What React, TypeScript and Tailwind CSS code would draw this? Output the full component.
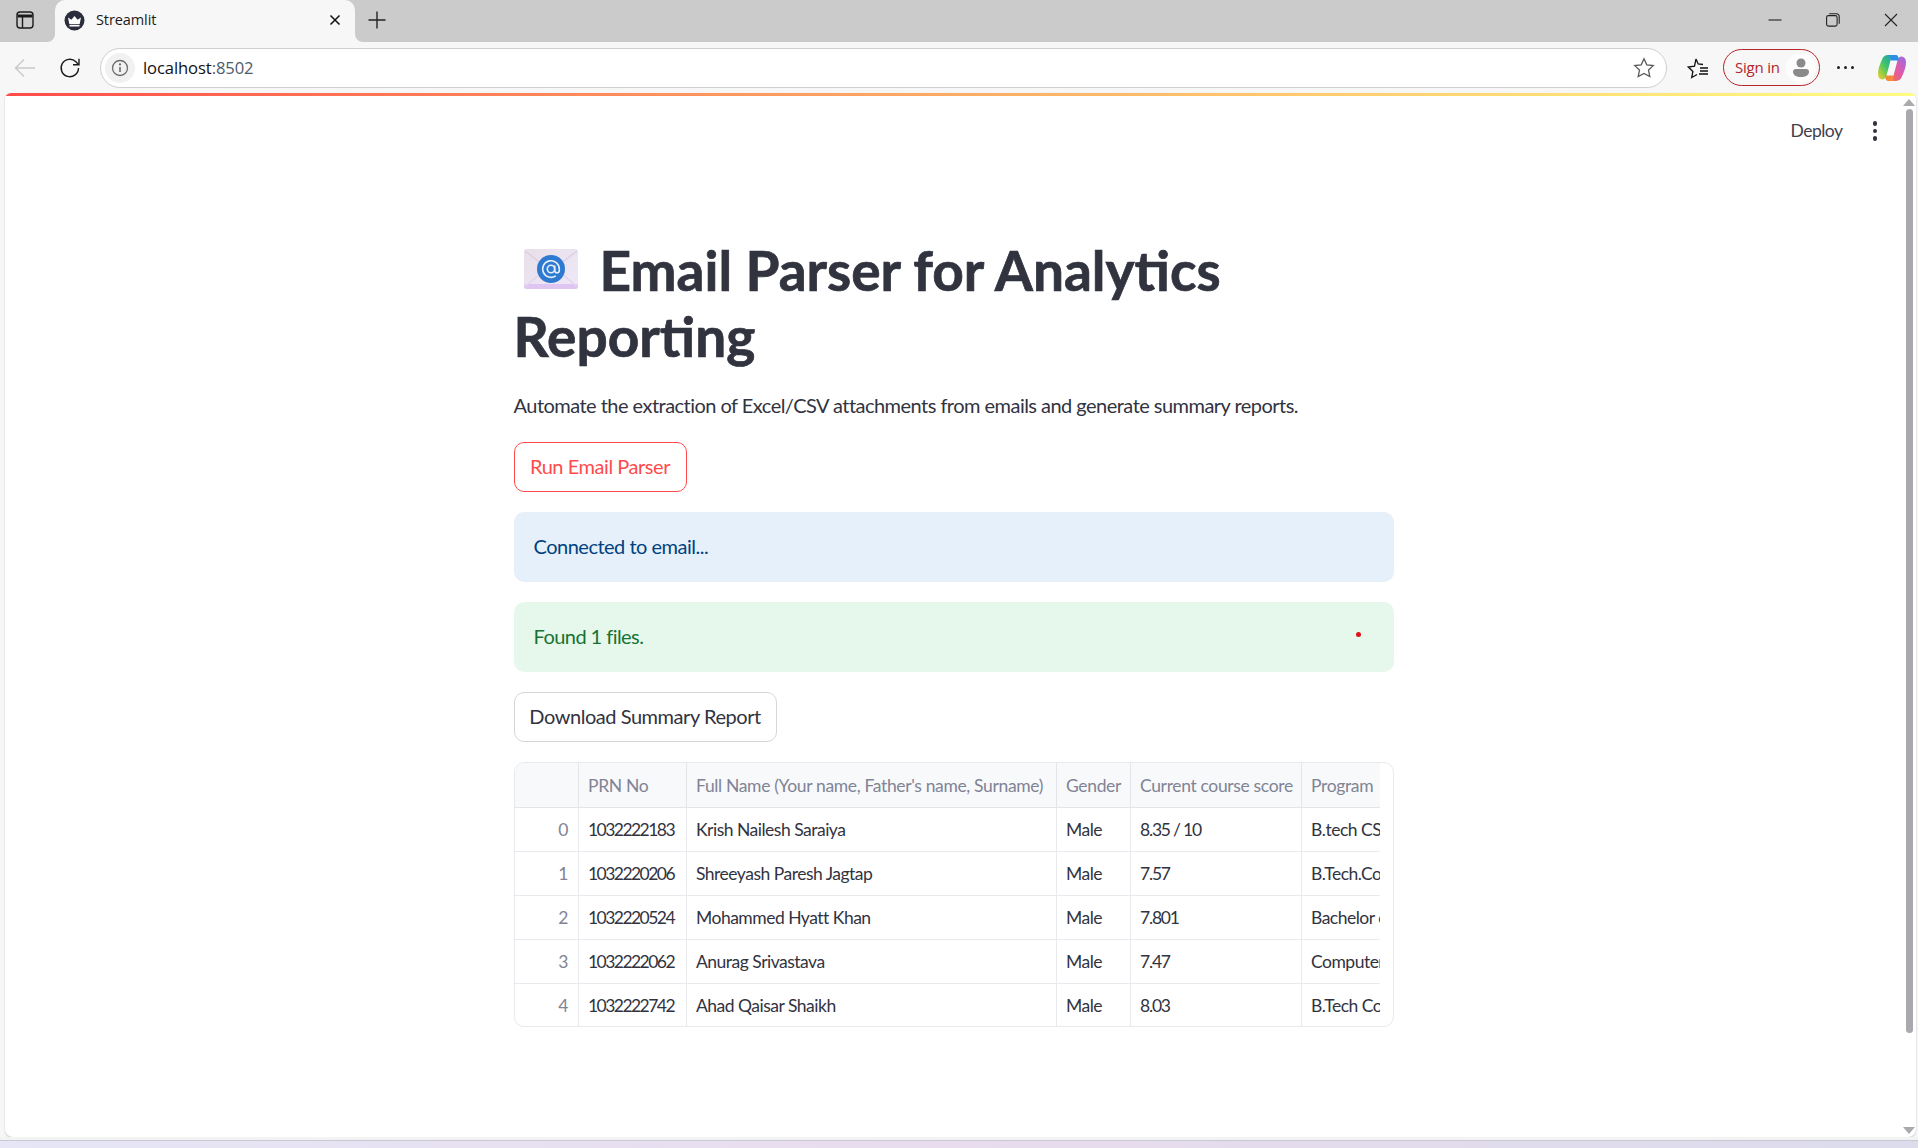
const rows = [
  ["0", "1032222183", "Krish Nailesh Saraiya", "Male", "8.35 / 10", "B.tech CSE"],
  ["1", "1032220206", "Shreeyash Paresh Jagtap", "Male", "7.57", "B.Tech.Computer"],
  ["2", "1032220524", "Mohammed Hyatt Khan", "Male", "7.801", "Bachelor of Technology"],
  ["3", "1032222062", "Anurag Srivastava", "Male", "7.47", "Computer Engineering"],
  ["4", "1032222742", "Ahad Qaisar Shaikh", "Male", "8.03", "B.Tech Computer"],
];
const heads = ["", "PRN No", "Full Name (Your name, Father's name, Surname)", "Gender", "Current course score", "Program"];

function TabCorner({ side }: { side: "l" | "r" }) {
  return (
    <span className={side === "l" ? "absolute bottom-0 -left-[8px] w-[8px] h-[8px] bg-[#f7f7f7]" : "absolute bottom-0 -right-[8px] w-[8px] h-[8px] bg-[#f7f7f7]"}>
      <span className={side === "l" ? "block w-full h-full bg-[#cbcbcb] rounded-br-[8px]" : "block w-full h-full bg-[#cbcbcb] rounded-bl-[8px]"} />
    </span>
  );
}

function TabBar() {
  return (
    <div className="h-[42px] bg-[#cbcbcb] flex items-stretch shrink-0">
      <div className="w-[55px] flex items-center justify-center pr-[6px] pb-[2px]">
        <svg width="20" height="20" viewBox="0 0 20 20" fill="none" stroke="#1b1b1b" strokeWidth="1.4">
          <rect x="2" y="2" width="16" height="16" rx="3" />
          <path d="M2.5 6h15" strokeWidth="3" />
          <path d="M7.5 6v12" />
        </svg>
      </div>
      <div className="relative w-[300px] bg-[#f7f7f7] rounded-t-[10px] flex items-center pl-[9px] pr-[14px] pb-[2px]">
        <TabCorner side="l" />
        <TabCorner side="r" />
        <svg width="21" height="21" viewBox="0 0 21 21">
          <circle cx="10.5" cy="10.5" r="10" fill="#2b2d3c" />
          <path d="M4 7.5l3.4 2.3 3.1-3.8 3.1 3.8L17 7.500l-1.300 6.500H5.300z" fill="#fff" />
          <rect x="5.500" y="14.800" width="10" height="1.700" fill="#fff" />
        </svg>
        <span className="ml-[11px] flex-1 text-[14.5px] text-[#1c1c1c] font-['Open_Sans',sans-serif] tracking-[-0.1px]">Streamlit</span>
        <svg width="12" height="12" viewBox="0 0 12 12" stroke="#111" strokeWidth="1.5">
          <path d="M1.500 1.500l9 9M10.500 1.500l-9 9" />
        </svg>
      </div>
      <div className="ml-[12px] flex items-center pb-[2px]">
        <svg width="20" height="20" viewBox="0 0 20 20" stroke="#222" strokeWidth="1.4">
          <path d="M10 1.500v17M1.500 10h17" />
        </svg>
      </div>
      <div className="flex-1" />
      <div className="flex items-center pr-[20px] gap-[44px] pb-[2px]">
        <svg width="14" height="14" viewBox="0 0 14 14" stroke="#222" strokeWidth="1.100"><path d="M0.500 7h13" /></svg>
        <svg width="14" height="14" viewBox="0 0 14 14" fill="none" stroke="#222" strokeWidth="1.100">
          <rect x="0.600" y="2.600" width="10.500" height="10.500" rx="1.800" />
          <path d="M3.200 0.800h7.500a2.500 2.500 0 0 1 2.500 2.500v7.500" />
        </svg>
        <svg width="14" height="14" viewBox="0 0 14 14" stroke="#222" strokeWidth="1.100"><path d="M1 1l12 12M13 1L1 13" /></svg>
      </div>
    </div>
  );
}

function Toolbar() {
  return (
    <div className="h-[51px] bg-[#f7f7f7] flex items-center shrink-0 pl-[14px]">
      <svg width="22" height="22" viewBox="0 0 22 22" fill="none" stroke="#c9c9c9" strokeWidth="1.400" className="mr-[23px]">
        <path d="M21 11H1.500M10 2.500L1.500 11l8.500 8.500" />
      </svg>
      <svg width="22" height="22" viewBox="0 0 22 22" fill="none" stroke="#1b1b1b" strokeWidth="1.400">
        <path d="M19.500 11a8.700 8.700 0 1 1-2.600-6.200L19.500 7.400" />
        <path d="M20 1.800v6h-6" />
      </svg>
      <div className="ml-[19px] w-[1567px] h-[40px] rounded-full border border-[#cfcfcf] bg-white flex items-center pl-[4px] pr-[11px]">
        <span className="w-[30px] h-[30px] rounded-full bg-[#f1f1f1] flex items-center justify-center">
          <svg width="18" height="18" viewBox="0 0 18 18" fill="none" stroke="#6b6b6b" strokeWidth="1.300">
            <circle cx="9" cy="9" r="7.500" />
            <path d="M9 8v5" strokeWidth="1.600" />
            <circle cx="9" cy="5.400" r="0.500" fill="#6b6b6b" />
          </svg>
        </span>
        <span className="ml-[8px] flex-1 text-[16.6px] tracking-[-0.1px] text-[#111] font-['Open_Sans',sans-serif] pt-[1px]">
          localhost<span className="text-[#4d5a6d]">:8502</span>
        </span>
        <svg width="22" height="22" viewBox="0 0 22 22" fill="none" stroke="#5a5a5a" strokeWidth="1.300">
          <path d="M11 1.800l2.800 6 6.500.8-4.800 4.500 1.300 6.500L11 16.400l-5.800 3.200 1.300-6.500L1.700 8.600l6.500-.8z" />
        </svg>
      </div>
      <svg width="22" height="22" viewBox="0 0 22 22" fill="none" stroke="#111" strokeWidth="1.300" className="ml-[20px]">
        <path d="M9 2l2.200 5 4.800.5M10 17.500l-5.300 3 1.200-6L1.300 10l6.200-.9L9 2" />
        <path d="M13 11h8M13 14h8M12 17h9" />
      </svg>
      <div className="ml-[14px] w-[97px] h-[37px] rounded-full border-[1.5px] border-[#b3262b] flex items-center pl-[11px] pr-[3px] justify-between">
        <span className="text-[15px] text-[#b3262b] font-['Open_Sans',sans-serif] tracking-[-0.2px]">Sign in</span>
        <span className="w-[30px] h-[30px] rounded-full bg-[#fdfdfd] flex items-center justify-center">
          <svg width="18" height="20" viewBox="0 0 18 20" fill="#8a8a8a">
            <circle cx="9" cy="5" r="4.500" />
            <path d="M1 14a3 3 0 0 1 3-3h10a3 3 0 0 1 3 3c0 3-3.500 5-8 5s-8-2-8-5z" />
          </svg>
        </span>
      </div>
      <div className="ml-[17px] flex gap-[4px]">
        <span className="w-[3px] h-[3px] rounded-full bg-[#222]" />
        <span className="w-[3px] h-[3px] rounded-full bg-[#222]" />
        <span className="w-[3px] h-[3px] rounded-full bg-[#222]" />
      </div>
      <svg width="28" height="28" viewBox="0 0 28 26" className="ml-[24px]" preserveAspectRatio="none">
        <defs>
          <linearGradient id="cpa" x1="0" y1="1" x2="1" y2="0">
            <stop offset="0" stopColor="#f5d320" />
            <stop offset="0.5" stopColor="#3dc46a" />
            <stop offset="1" stopColor="#1d8fe0" />
          </linearGradient>
          <linearGradient id="cpb" x1="0" y1="1" x2="1" y2="0">
            <stop offset="0" stopColor="#f2703c" />
            <stop offset="0.5" stopColor="#e05aa8" />
            <stop offset="1" stopColor="#9b6ae8" />
          </linearGradient>
        </defs>
        <path d="M10 1h8c-3 0-4.500 2-5.500 5L8.500 20c-.7 2.500-2.500 4-5 3.500C1 23 0 21 0 18c0-4 2-9 4-13 1-2.500 3-4 6-4z" fill="url(#cpa)" />
        <path d="M18 25h-8c3 0 4.500-2 5.500-5l4-14c.7-2.500 2.500-4 5-3.500 2.500.5 3.500 2.500 3.500 5.500 0 4-2 9-4 13-1 2.500-3 4-6 4z" fill="url(#cpb)" />
        <path d="M18 1h-7c2 .5 1.500 3 2 5h8c-.3-2.500-1-5-3-5z" fill="#2a8fe6" />
        <path d="M10 25h7c-2-.5-1.500-3-2-5H7c.3 2.500 1 5 3 5z" fill="#f58a3a" />
      </svg>
    </div>
  );
}

function EnvelopeIcon() {
  return (
    <svg width="56" height="42" viewBox="0 0 56 42" className="inline-block align-baseline mr-[21px] ml-[9px] mb-[1px]">
      <defs>
        <linearGradient id="env" x1="0" y1="0" x2="1" y2="1">
          <stop offset="0" stopColor="#e8dfe8" />
          <stop offset="1" stopColor="#efe8f8" />
        </linearGradient>
      </defs>
      <rect x="1" y="1" width="54" height="40" rx="3" fill="url(#env)" />
      <rect x="1" y="36" width="54" height="5" rx="2.500" fill="#dfc6f2" />
      <path d="M2 3l26 20L54 3" fill="none" stroke="#ddd0e6" strokeWidth="1.500" />
      <path d="M2 39l18-16M54 39L36 23" fill="none" stroke="#e2d5ee" strokeWidth="1.500" />
      <circle cx="28" cy="21" r="14" fill="#2f7ad1" />
      <circle cx="28" cy="21" r="3.700" fill="none" stroke="#e6f0fb" strokeWidth="1.600" />
      <path d="M31.700 17.500v5a2.300 2.300 0 0 0 4.600 0V21a8.300 8.300 0 1 0-3.500 6.800" fill="none" stroke="#e6f0fb" strokeWidth="1.600" />
    </svg>
  );
}

function cellClass(i: number) {
  if (i === 0) return "text-right pr-[10px] pt-[2px] text-[#808495] border-b border-[#e9eaee]";
  if (i === 1) return "pl-[9px] pt-[2px] tracking-[-1.55px] whitespace-nowrap overflow-hidden border-l border-b border-[#e9eaee]";
  if (i === 4) return "pl-[9px] pt-[2px] tracking-[-1.2px] whitespace-nowrap overflow-hidden border-l border-b border-[#e9eaee]";
  return "pl-[9px] pt-[2px] whitespace-nowrap overflow-hidden border-l border-b border-[#e9eaee]";
}

function DataTable() {
  const widths = ["w-[64px]", "w-[108px]", "w-[370px]", "w-[74px]", "w-[171px]", "w-[78px]"];
  return (
    <div className="h-[265px] rounded-[10px] border border-[#e9eaee] pr-[14px] pb-[6px] overflow-hidden">
      <table className="table-fixed w-[865px] border-collapse text-[17.5px] tracking-[-0.5px] text-[#31333f]">
        <colgroup>
          {widths.map((w, i) => (
            <col key={i} className={w} />
          ))}
        </colgroup>
        <thead>
          <tr className="h-[44px] bg-[#f8f9fb] text-[#808495] tracking-[-0.35px]">
            {heads.map((h, i) => (
              <th key={i} className={i === 0 ? "font-normal text-left pl-[9px] pt-[2px] border-b border-[#e3e5e9]" : "font-normal text-left pl-[9px] pt-[2px] border-b border-l border-[#e3e5e9] whitespace-nowrap overflow-hidden"}>
                {h}
              </th>
            ))}
          </tr>
        </thead>
        <tbody>
          {rows.map((r, ri) => (
            <tr key={ri} className="h-[44px]">
              {r.map((c, i) => (
                <td key={i} className={cellClass(i)}>
                  {c}
                </td>
              ))}
            </tr>
          ))}
        </tbody>
      </table>
    </div>
  );
}

function Page() {
  return (
    <div className="flex-1 min-h-0 ml-[5px] mr-[2px] mt-0 bg-white rounded-t-[6px] rounded-b-[8px] shadow-[0_1px_2px_rgba(0,0,0,0.2)] flex flex-col overflow-hidden font-['Lato',sans-serif]">
      <div className="h-[3px] shrink-0 bg-gradient-to-r from-[#ff4b4b] to-[#fffd80]" />
      <div className="flex-1 min-h-0 flex">
        <div className="flex-1 min-w-0 flex flex-col">
          <div className="flex justify-end items-center h-[70px] pr-[25px] text-[17.5px] tracking-[-0.5px] text-[#3f414c]">
            <span className="mr-[30px]">Deploy</span>
            <span className="flex flex-col gap-[3px]">
              <span className="w-[4.500px] h-[4.500px] rounded-full bg-[#31333f]" />
              <span className="w-[4.500px] h-[4.500px] rounded-full bg-[#31333f]" />
              <span className="w-[4.500px] h-[4.500px] rounded-full bg-[#31333f]" />
            </span>
          </div>
          <div className="relative w-[880px] mx-auto pt-[71px] flex flex-col gap-[20px]">
            <h1 className="text-[55px] leading-[66px] font-bold tracking-[0px] text-[#31333f] [-webkit-text-stroke:0.7px_#31333f]">
              <EnvelopeIcon />
              Email Parser for Analytics Reporting
            </h1>
            <p className="text-[20px] leading-[32px] tracking-[-0.53px] text-[#31333f] mb-[1px]">
              Automate the extraction of Excel/CSV attachments from emails and generate summary reports.
            </p>
            <button className="self-start h-[50px] w-[173px] rounded-[10px] border border-[#ff4b4b] text-[20px] tracking-[-0.45px] text-[#ff4b4b] bg-white pb-[2px]">
              Run Email Parser
            </button>
            <div className="h-[70px] rounded-[10px] bg-[#e6f0fb] text-[#004280] text-[20px] tracking-[-0.5px] flex items-center px-[20px] pb-[2px]">
              Connected to email...
            </div>
            <div className="relative h-[70px] rounded-[10px] bg-[#e6f8ec] text-[#177233] text-[20px] tracking-[-0.55px] flex items-center px-[20px] pb-[2px]">
              Found 1 files.
              <span className="absolute left-[842px] top-[30px] w-[5px] h-[5px] rounded-full bg-[#e0101c]" />
            </div>
            <button className="self-start h-[50px] w-[263px] rounded-[10px] border border-[#d5d6da] text-[20px] tracking-[-0.45px] text-[#31333f] bg-white pb-[2px]">
              Download Summary Report
            </button>
            <DataTable />
          </div>
        </div>
        <div className="relative w-[14px] shrink-0 mr-0 flex flex-col items-center">
          <svg width="12" height="8" viewBox="0 0 12 8" className="mt-[3px]" fill="#a9a9ae"><path d="M6 0l6 7H0z" /></svg>
          <div className="mt-[2px] w-[7px] h-[924px] rounded-full bg-[#a9a9ae]" />
          <div className="flex-1" />
          <svg width="12" height="8" viewBox="0 0 12 8" className="mb-[3px]" fill="#a9a9ae"><path d="M6 8L0 1h12z" /></svg>
        </div>
      </div>
    </div>
  );
}

export default function App() {
  return (
    <div className="h-screen w-full overflow-hidden flex flex-col bg-[#f7f7f7]">
      <TabBar />
      <Toolbar />
      <Page />
      <div className="h-[3px] shrink-0 bg-[#f3f3f3]" />
      <div className="h-[8px] shrink-0 bg-gradient-to-r from-[#e6e6f6] via-[#e8dcee] to-[#dcdcec] border-t border-[#c9c9d6]" />
    </div>
  );
}
